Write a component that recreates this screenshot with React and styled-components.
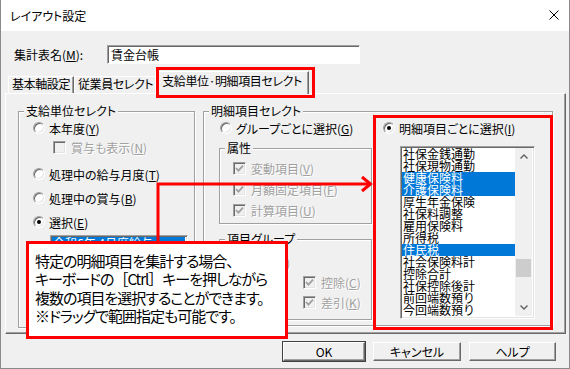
import React from 'react'
import styled, { createGlobalStyle } from 'styled-components'

const GlobalStyle = createGlobalStyle`
  html, body {
    margin: 0;
    padding: 0;
    background: #fff;
  }
  body {
    font-family: "Noto Sans CJK JP", "Noto Sans", sans-serif;
    font-size: 12px;
    color: #000;
  }
  * {
    box-sizing: border-box;
  }
`

const Window = styled.div`
  position: relative;
  width: 570px;
  height: 369px;
  background: #f0f0f0;
  border: 1px solid #8a8a8a;
  border-top: none;
  display: flex;
  flex-direction: column;
  overflow: hidden;
  font-feature-settings: "palt";
`

const TitleBar = styled.div`
  flex: none;
  height: 31px;
  background: #fff;
  display: flex;
  align-items: center;
  justify-content: space-between;
  padding: 0 10px 1px 9px;
  font-size: 12px;
`

const Body = styled.div`
  flex: 1;
  display: flex;
  flex-direction: column;
  padding: 0 3px 0 4px;
`

const NameRow = styled.div`
  display: flex;
  align-items: center;
  height: 19px;
  margin-top: 14px;
`

const NameLabel = styled.div`
  width: 102px;
  padding-left: 9px;
`

const TextBox = styled.div`
  width: 253px;
  height: 19px;
  background: #fff;
  border: 1px solid;
  border-color: #a0a0a0 #fff #fff #a0a0a0;
  box-shadow: inset 1px 1px 0 #696969;
  padding: 0 3px;
  display: flex;
  align-items: center;
`

const U = styled.span`
  text-decoration: underline;
  text-underline-offset: 1px;
`

const TabRow = styled.div`
  display: flex;
  align-items: flex-end;
  height: 22px;
  margin-top: 7px;
  padding-left: 3px;
  position: relative;
  z-index: 2;
`

const Tab = styled.div`
  height: ${p => (p.$active ? 23 : 17)}px;
  margin: 0 ${p => (p.$active ? -2 : 0)}px ${p => (p.$active ? -1 : 0)}px;
  padding: 0 ${p => (p.$active ? 6 : 3)}px ${p => (p.$active ? 5 : 3)}px;
  display: flex;
  align-items: center;
  letter-spacing: -0.4px;
  background: #f0f0f0;
  border: 1px solid;
  border-bottom: none;
  border-color: #fff #696969 transparent #fff;
  box-shadow: inset -1px 0 0 #a0a0a0;
  white-space: nowrap;
  position: relative;
  z-index: ${p => (p.$active ? 2 : 1)};
`

const Panel = styled.div`
  height: 241px;
  border: 1px solid;
  border-color: #fff #696969 #696969 #fff;
  box-shadow: inset -1px -1px 0 #a0a0a0;
  display: grid;
  grid-template-columns: 177px 350px;
  column-gap: 8px;
  align-items: start;
  padding: 10px 0 0 12px;
`

const Group = styled.fieldset`
  margin: ${p => p.$mt || 0}px 0 0;
  padding: 0;
  min-width: 0;
  height: ${p => p.$h}px;
  border: 1px solid #a0a0a0;
  box-shadow: inset 1px 1px 0 #fff, 1px 1px 0 #fff;
`

const Legend = styled.legend`
  margin-left: 5px;
  padding: 0 2px;
  line-height: 14px;
  background: #f0f0f0;
`

const GroupContent = styled.div`
  display: flex;
  flex-direction: column;
  padding: ${p => p.$pt || 0}px 0 0 ${p => p.$pl || 0}px;
`

const Option = styled.div`
  display: flex;
  align-items: center;
  gap: ${p => (p.$check ? 5 : 4)}px;
  height: ${p => p.$h || 20}px;
  margin: ${p => p.$mt || 0}px 0 0 ${p => p.$ml || 0}px;
  white-space: nowrap;
  color: ${p => (p.$disabled ? '#a0a0a0' : '#000')};
  text-shadow: ${p => (p.$disabled ? '1px 1px 0 #fff' : 'none')};
  grid-column: ${p => p.$col || 'auto'};
  grid-row: ${p => p.$row || 'auto'};
`

const RadioDot = styled.span`
  flex: none;
  width: 12px;
  height: 12px;
  border-radius: 50%;
  border: 1px solid;
  border-color: #a0a0a0 #fff #fff #a0a0a0;
  box-shadow: inset 1px 1px 0 #696969, inset -1px -1px 0 #e3e3e3;
  background: #fff;
  display: flex;
  align-items: center;
  justify-content: center;

  &::after {
    content: '';
    width: 4px;
    height: 4px;
    border-radius: 50%;
    background: ${p => (p.$checked ? '#000' : 'transparent')};
  }
`

const CheckBox = styled.span`
  flex: none;
  width: 13px;
  height: 13px;
  border: 1px solid;
  border-color: #a0a0a0 #fff #fff #a0a0a0;
  box-shadow: inset 1px 1px 0 #696969, inset -1px -1px 0 #e3e3e3;
  background: ${p => (p.$disabled ? '#f0f0f0' : '#fff')};
  display: flex;
  align-items: center;
  justify-content: center;
`

const ItemGrid = styled.div`
  display: grid;
  grid-template-columns: 70px 70px;
  grid-auto-rows: 20px;
  padding: 6px 0 0 13px;
`

const Columns = styled.div`
  display: grid;
  grid-template-columns: 153px 1fr;
  column-gap: 11px;
  padding-left: 15px;
`

const Column = styled.div`
  display: flex;
  flex-direction: column;
`

const ListBox = styled.div`
  width: ${p => p.$w}px;
  height: ${p => p.$h}px;
  margin: ${p => p.$mt || 0}px 0 0 ${p => p.$ml || 0}px;
  background: #fff;
  border: 1px solid;
  border-color: #a0a0a0 #fff #fff #a0a0a0;
  box-shadow: inset 1px 1px 0 #696969, inset -1px -1px 0 #e3e3e3;
  padding: 1px 2px 2px 1px;
  display: flex;
  overflow: hidden;
  font-feature-settings: normal;
`

const ListItems = styled.div`
  flex: 1;
  min-width: 0;
  overflow: hidden;
`

const ListItem = styled.div`
  height: 12px;
  line-height: 12px;
  font-size: 12px;
  padding-left: 1px;
  white-space: nowrap;
  background: ${p => (p.$selected ? '#0078d7' : 'transparent')};
  color: ${p => (p.$selected ? '#fff' : '#000')};
`

const ScrollBar = styled.div`
  flex: none;
  width: 17px;
  background: #f0f0f0;
  display: flex;
  flex-direction: column;
  align-items: center;
`

const ScrollArrow = styled.div`
  height: 17px;
  width: 17px;
  display: flex;
  align-items: center;
  justify-content: center;
`

const ScrollTrack = styled.div`
  flex: 1;
  width: 100%;
  padding: 94px 1px 0;
`

const ScrollThumb = styled.div`
  height: 18px;
  background: #cdcdcd;
`

const ButtonRow = styled.div`
  display: flex;
  justify-content: flex-end;
  gap: 8px;
  margin-top: 8px;
  padding-right: 10px;
`

const Button = styled.div`
  width: ${p => p.$w}px;
  height: 19px;
  background: #f0f0f0;
  border: 1px solid;
  border-color: #fff #696969 #696969 #fff;
  box-shadow: inset -1px -1px 0 #a0a0a0;
  outline: ${p => (p.$default ? '1px solid #404040' : 'none')};
  display: flex;
  align-items: center;
  justify-content: center;
`

const Mark = styled.div`
  position: absolute;
  left: ${p => p.$x - 1}px;
  top: ${p => p.$y}px;
  width: ${p => p.$w}px;
  height: ${p => p.$h}px;
  border: 3px solid #ff0000;
  z-index: 5;
`

const Callout = styled(Mark)`
  background: #fff;
  padding: 8px 0 0 6px;
  font-size: 15px;
  line-height: 18.4px;
  letter-spacing: -1px;
  white-space: pre-line;
  z-index: 7;
`

const Wide = styled.span`
  font-feature-settings: normal;
`

const ArrowLayer = styled.svg`
  position: absolute;
  left: -1px;
  top: 0;
  z-index: 6;
  pointer-events: none;
`

const Check = () => (
  <svg width="9" height="9" viewBox="0 0 9 9">
    <polyline points="1,4 3.4,6.6 8,1.6" fill="none" stroke="#a0a0a0" strokeWidth="1.8" />
  </svg>
)

const Radio = ({ checked, children, ...rest }) => (
  <Option {...rest}>
    <RadioDot $checked={checked} />
    <span>{children}</span>
  </Option>
)

const CheckItem = ({ checked, disabled, children, ...rest }) => (
  <Option $check $disabled={disabled} {...rest}>
    <CheckBox $disabled={disabled}>{checked && <Check />}</CheckBox>
    <span>{children}</span>
  </Option>
)

const items = [
  ['社保金銭通勤'],
  ['社保現物通勤'],
  ['健康保険料', true],
  ['介護保険料', true],
  ['厚生年金保険'],
  ['社保料調整'],
  ['雇用保険料'],
  ['所得税'],
  ['住民税', true],
  ['社会保険料計'],
  ['控除合計'],
  ['社保控除後計'],
  ['前回端数預り'],
  ['今回端数預り'],
  ['年末調整還付'],
]

const App = () => (
  <>
    <GlobalStyle />
    <Window>
      <TitleBar>
        <span>レイアウト設定</span>
        <svg width="10" height="10" viewBox="0 0 10 10">
          <path d="M0.5 0.5 L9.5 9.5 M9.5 0.5 L0.5 9.5" stroke="#000" strokeWidth="1" />
        </svg>
      </TitleBar>

      <Body>
        <NameRow>
          <NameLabel>
            集計表名(<U>M</U>):
          </NameLabel>
          <TextBox>賃金台帳</TextBox>
        </NameRow>

        <TabRow>
          <Tab>基本軸設定</Tab>
          <Tab>従業員セレクト</Tab>
          <Tab $active>支給単位·明細項目セレクト</Tab>
        </TabRow>

        <Panel>
          <Group $h={224}>
            <Legend>支給単位セレクト</Legend>
            <GroupContent $pl={14}>
              <Radio>
                本年度(<U>Y</U>)
              </Radio>
              <CheckItem disabled $ml={20} $mt={-1}>
                賞与も表示(<U>N</U>)
              </CheckItem>
              <Radio $mt={7}>
                処理中の給与月度(<U>T</U>)
              </Radio>
              <Radio $mt={4}>
                処理中の賞与(<U>B</U>)
              </Radio>
              <Radio checked $mt={4}>
                選択(<U>E</U>)
              </Radio>
              <ListBox $w={138} $h={86} $mt={3} $ml={17}>
                <ListItems>
                  <ListItem $selected>令和6年 4月度給与</ListItem>
                  <ListItem>令和6年 5月度給与</ListItem>
                  <ListItem>令和6年 6月度給与</ListItem>
                </ListItems>
              </ListBox>
            </GroupContent>
          </Group>

          <Group $h={222}>
            <Legend>明細項目セレクト</Legend>
            <Columns>
              <Column>
                <Radio $ml={1}>
                  グループごとに選択(<U>G</U>)
                </Radio>
                <Group $mt={3} $h={83}>
                  <Legend>属性</Legend>
                  <GroupContent $pl={13} $pt={3}>
                    <CheckItem checked disabled $h={21}>
                      変動項目(<U>V</U>)
                    </CheckItem>
                    <CheckItem checked disabled $h={21}>
                      月額固定項目(<U>F</U>)
                    </CheckItem>
                    <CheckItem checked disabled $h={21}>
                      計算項目(<U>U</U>)
                    </CheckItem>
                  </GroupContent>
                </Group>
                <Group $mt={8} $h={88}>
                  <Legend>項目グループ</Legend>
                  <ItemGrid>
                    <CheckItem checked disabled $col="1" $row="1">
                      支給(<U>S</U>)
                    </CheckItem>
                    <CheckItem checked disabled $col="2" $row="2">
                      控除(<U>C</U>)
                    </CheckItem>
                    <CheckItem checked disabled $col="2" $row="3">
                      差引(<U>K</U>)
                    </CheckItem>
                  </ItemGrid>
                </Group>
              </Column>

              <Column>
                <Radio checked>
                  明細項目ごとに選択(<U>I</U>)
                </Radio>
                <ListBox $w={135} $h={173} $mt={8} $ml={17}>
                  <ListItems>
                    {items.map(([label, sel]) => (
                      <ListItem key={label} $selected={sel}>
                        {label}
                      </ListItem>
                    ))}
                  </ListItems>
                  <ScrollBar>
                    <ScrollArrow>
                      <svg width="8" height="5" viewBox="0 0 8 5">
                        <polyline points="0.5,4.5 4,1 7.5,4.5" fill="none" stroke="#606060" strokeWidth="1.4" />
                      </svg>
                    </ScrollArrow>
                    <ScrollTrack>
                      <ScrollThumb />
                    </ScrollTrack>
                    <ScrollArrow>
                      <svg width="8" height="5" viewBox="0 0 8 5">
                        <polyline points="0.5,0.5 4,4 7.5,0.5" fill="none" stroke="#606060" strokeWidth="1.4" />
                      </svg>
                    </ScrollArrow>
                  </ScrollBar>
                </ListBox>
              </Column>
            </Columns>
          </Group>
        </Panel>

        <ButtonRow>
          <Button $w={82} $default>OK</Button>
          <Button $w={88}>キャンセル</Button>
          <Button $w={87}>ヘルプ</Button>
        </ButtonRow>
      </Body>

      <Mark $x={156} $y={67} $w={159} $h={31} />
      <Mark $x={373} $y={115} $w={180} $h={215} />
      <ArrowLayer width="570" height="369" viewBox="0 0 570 369">
        <path d="M158 243 V184 H370" fill="none" stroke="#ff0000" strokeWidth="3" />
        <path d="M362 177 L370.5 184 L362 191" fill="none" stroke="#ff0000" strokeWidth="3" />
      </ArrowLayer>
      <Callout $x={26} $y={241} $w={262} $h={98}>
        特定の明細項目を集計する場合、
        {'\n'}キーボードの<Wide>［</Wide>Ctrl<Wide>］</Wide>キーを押しながら
        {'\n'}複数の項目を選択することができます。
        {'\n'}※ドラッグで範囲指定も可能です。
      </Callout>
    </Window>
  </>
)

export default App
